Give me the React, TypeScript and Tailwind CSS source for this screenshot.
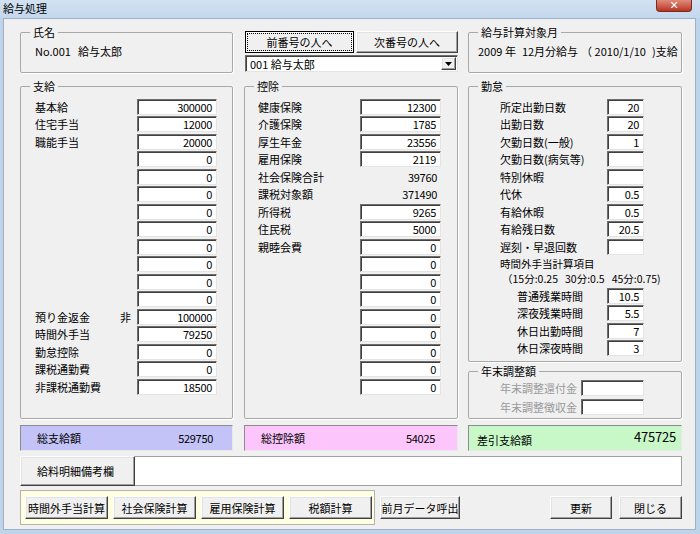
import React from "react";

const sunken =
  "bg-white border border-t-[#6e6e6e] border-l-[#6e6e6e] border-b-[#e4e4e4] border-r-[#e4e4e4] shadow-[inset_1px_1px_0_#404040]";
const raised =
  "bg-[#f0f0f0] border border-t-white border-l-white border-b-[#404040] border-r-[#404040] shadow-[inset_-1px_-1px_0_#a0a0a0,inset_1px_1px_0_#e3e3e3]";

type Row = { label: string; value: string; box?: boolean; mark?: string };

const payRows: Row[] = [
  { label: "基本給", value: "300000" },
  { label: "住宅手当", value: "12000" },
  { label: "職能手当", value: "20000" },
  ...Array.from({ length: 9 }, () => ({ label: "", value: "0" })),
  { label: "預り金返金", value: "100000", mark: "非" },
  { label: "時間外手当", value: "79250" },
  { label: "勤怠控除", value: "0" },
  { label: "課税通勤費", value: "0" },
  { label: "非課税通勤費", value: "18500" },
];

const deductRows: Row[] = [
  { label: "健康保険", value: "12300" },
  { label: "介護保険", value: "1785" },
  { label: "厚生年金", value: "23556" },
  { label: "雇用保険", value: "2119" },
  { label: "社会保険合計", value: "39760", box: false },
  { label: "課税対象額", value: "371490", box: false },
  { label: "所得税", value: "9265" },
  { label: "住民税", value: "5000" },
  { label: "親睦会費", value: "0" },
  ...Array.from({ length: 8 }, () => ({ label: "", value: "0" })),
];

const attendRows: Row[] = [
  { label: "所定出勤日数", value: "20" },
  { label: "出勤日数", value: "20" },
  { label: "欠勤日数(一般)", value: "1" },
  { label: "欠勤日数(病気等)", value: "" },
  { label: "特別休暇", value: "" },
  { label: "代休", value: "0.5" },
  { label: "有給休暇", value: "0.5" },
  { label: "有給残日数", value: "20.5" },
  { label: "遅刻・早退回数", value: "" },
];

const overtimeRows: Row[] = [
  { label: "普通残業時間", value: "10.5" },
  { label: "深夜残業時間", value: "5.5" },
  { label: "休日出勤時間", value: "7" },
  { label: "休日深夜時間", value: "3" },
];

function Field({ value, className = "" }: { value: string; className?: string }) {
  return (
    <div className={`${sunken} h-[16px] text-right pr-[4px] leading-[14px] tracking-[-0.3px] ${className}`}>
      {value}
    </div>
  );
}

function Btn({ children, className = "" }: { children: React.ReactNode; className?: string }) {
  return (
    <button className={`${raised} flex items-center justify-center leading-[14px] ${className}`}>
      {children}
    </button>
  );
}

function Group({
  title,
  className = "",
  children,
}: {
  title: string;
  className?: string;
  children?: React.ReactNode;
}) {
  return (
    <fieldset className={`border border-[#a8a8a8] rounded-[2px] shadow-[1px_1px_0_#fff] ${className}`}>
      <legend className="ml-[9px] px-[3px] leading-[14px]">{title}</legend>
      {children}
    </fieldset>
  );
}

export default function App() {
  return (
    <div className="w-[700px] h-[534px] bg-[#bed4eb] flex flex-col overflow-hidden text-[11px] text-black font-['Noto_Sans_CJK_JP',sans-serif]">
      {/* title bar */}
      <div className="h-[18px] flex items-start bg-gradient-to-b from-[#d3e2f2] to-[#c3d7ed]">
        <span className="pl-[3px] pt-[1px] leading-[15px] text-[11px]">給与処理</span>
        <div className="ml-auto mr-[8px] w-[36px] h-[12px] rounded-b-[4px] bg-gradient-to-b from-[#e08a7a] to-[#b8321f] border border-t-0 border-[#7a2a1e] flex items-center justify-center text-white text-[11px] font-bold leading-[10px] font-['DejaVu_Sans',sans-serif]">
          ✕
        </div>
      </div>

      {/* client area */}
      <div className="ml-[3px] mr-[4px] h-[512px] bg-[#f0f0f0] border border-[#9db2c8] pl-[16px] pt-[6px] flex flex-col">
        {/* row 1 */}
        <div className="flex h-[48px]">
          <Group title="氏名" className="w-[213px] h-[48px]">
            <div className="flex pl-[14px] pt-[5px] leading-[14px]">
              <span className="w-[43px]">No.001</span>
              <span>給与太郎</span>
            </div>
          </Group>
          <div className="ml-[11px] w-[214px] flex flex-col">
            <div className="flex mt-[6px] ml-[1px] gap-[2px]">
              <button className="w-[109px] h-[22px] border border-black bg-[#f0f0f0] flex p-[1px]">
                <div className="flex-1 flex items-center justify-center border border-dotted border-black shadow-[0_0_0_1px_#fff] leading-[14px]">
                  前番号の人へ
                </div>
              </button>
              <Btn className="w-[102px] h-[22px]">次番号の人へ</Btn>
            </div>
            <div className={`${sunken} mt-[2px] ml-[1px] h-[17px] flex items-center`}>
              <span className="pl-[4px] flex-1 leading-[14px]">001 給与太郎</span>
              <div className={`${raised} w-[15px] h-[13px] mr-[1px] flex items-center justify-center`}>
                <svg width="7" height="4" viewBox="0 0 7 4">
                  <path d="M0 0h7L3.5 4z" fill="#000" />
                </svg>
              </div>
            </div>
          </div>
          <Group title="給与計算対象月" className="ml-[10px] w-[214px] h-[48px]">
            <div className="flex pl-[9px] pt-[5px] leading-[14px] whitespace-nowrap">
              <span>2009 年</span>
              <span className="ml-[6px]">12月分給与</span>
              <span className="ml-[3px]">（ 2010/1/10</span>
              <span className="ml-[6px]">)支給</span>
            </div>
          </Group>
        </div>

        {/* row 2 */}
        <div className="flex mt-[6px] h-[340px]">
          <Group title="支給" className="w-[213px] h-[340px]">
            <div className="pl-[14px] pt-[5px]">
              {payRows.map((r, i) => (
                <div key={i} className="flex items-center h-[17.5px]">
                  <span className="w-[85px] leading-[14px]">{r.label}</span>
                  <span className="w-[17px] leading-[14px]">{r.mark ?? ""}</span>
                  <Field value={r.value} className="w-[80px]" />
                </div>
              ))}
            </div>
          </Group>

          <Group title="控除" className="ml-[11px] w-[214px] h-[340px]">
            <div className="pl-[13px] pt-[5px]">
              {deductRows.map((r, i) => (
                <div key={i} className="flex items-center h-[17.5px]">
                  <span className="w-[102px] leading-[14px]">{r.label}</span>
                  {r.box === false ? (
                    <span className="w-[81px] pr-[4px] text-right leading-[14px] tracking-[-0.3px]">{r.value}</span>
                  ) : (
                    <Field value={r.value} className="w-[81px]" />
                  )}
                </div>
              ))}
            </div>
          </Group>

          <div className="ml-[10px] w-[214px] flex flex-col">
            <Group title="勤怠" className="h-[283px]">
              <div className="pl-[31px] pt-[5px]">
                {attendRows.map((r, i) => (
                  <div key={i} className="flex items-center h-[17.5px]">
                    <span className="w-[107px] leading-[14px]">{r.label}</span>
                    <Field value={r.value} className="w-[37px]" />
                  </div>
                ))}
                <div className="text-[10.5px] leading-[15px]">時間外手当計算項目</div>
                <div className="text-[10.5px] leading-[15px] pl-[2px] flex whitespace-nowrap">
                  <span>（15分:0.25</span>
                  <span className="ml-[7px]">30分:0.5</span>
                  <span className="ml-[7px]">45分:0.75)</span>
                </div>
                <div className="mt-[1.5px]">
                  {overtimeRows.map((r, i) => (
                    <div key={i} className="flex items-center h-[17.5px] pl-[17px]">
                      <span className="w-[90px] leading-[14px]">{r.label}</span>
                      <Field value={r.value} className="w-[37px]" />
                    </div>
                  ))}
                </div>
              </div>
            </Group>
            <Group title="年末調整額" className="mt-[2px] h-[55px]">
              <div className="pl-[31px] text-[#9a9a9a]">
                {["年末調整還付金", "年末調整徴収金"].map((l) => (
                  <div key={l} className="flex items-center h-[19px]">
                    <span className="w-[81px] leading-[14px]">{l}</span>
                    <Field value="" className="w-[63px]" />
                  </div>
                ))}
              </div>
            </Group>
          </div>
        </div>

        {/* totals */}
        <div className="flex mt-[6px] h-[26px]">
          <div className="w-[213px] h-[26px] bg-[#c3c3f8] border border-[#8c8c8c] border-b-[#e8e8e8] border-r-[#e8e8e8] flex items-center pl-[16px] pr-[19px]">
            <span className="flex-1 leading-[14px]">総支給額</span>
            <span className="leading-[14px] tracking-[-0.3px]">529750</span>
          </div>
          <div className="ml-[11px] w-[214px] h-[26px] bg-[#fcc6fc] border border-[#8c8c8c] border-b-[#e8e8e8] border-r-[#e8e8e8] flex items-center pl-[16px] pr-[22px]">
            <span className="flex-1 leading-[14px]">総控除額</span>
            <span className="leading-[14px] tracking-[-0.3px]">54025</span>
          </div>
          <div className="ml-[10px] w-[214px] h-[26px] bg-[#c8f8c8] border border-[#8c8c8c] border-b-[#e8e8e8] border-r-[#e8e8e8] flex items-center pl-[8px] pr-[5px]">
            <span className="flex-1 leading-[14px] mt-[3px]">差引支給額</span>
            <span className="text-[13px] leading-[16px] tracking-[-0.2px] -mt-[2px]">475725</span>
          </div>
        </div>

        {/* remarks */}
        <div className="flex mt-[5px] h-[30px] w-[662px]">
          <div className={`${raised} bg-[#e0e0e0] w-[115px] h-[30px] flex items-center pl-[16px] leading-[14px]`}>
            給料明細備考欄
          </div>
          <div className="flex-1 h-[30px] bg-white border border-[#a0a0a0] border-l-0" />
        </div>

        {/* bottom buttons */}
        <div className="flex mt-[4px] h-[35px] w-[662px]">
          <div className="w-[355px] h-[35px] bg-[#ffffe1] border border-[#b4b4b4] flex pl-[4px] pt-[5px] gap-[5px]">
            <Btn className="w-[83px] h-[23px]">時間外手当計算</Btn>
            <Btn className="w-[83px] h-[23px]">社会保険計算</Btn>
            <Btn className="w-[83px] h-[23px]">雇用保険計算</Btn>
            <Btn className="w-[83px] h-[23px]">税額計算</Btn>
          </div>
          <Btn className="ml-[5px] mt-[6px] w-[80px] h-[23px]">前月データ呼出</Btn>
          <Btn className="ml-auto mt-[6px] w-[62px] h-[23px]">更新</Btn>
          <Btn className="ml-[7px] mt-[6px] w-[63px] h-[23px]">閉じる</Btn>
        </div>
      </div>
    </div>
  );
}
